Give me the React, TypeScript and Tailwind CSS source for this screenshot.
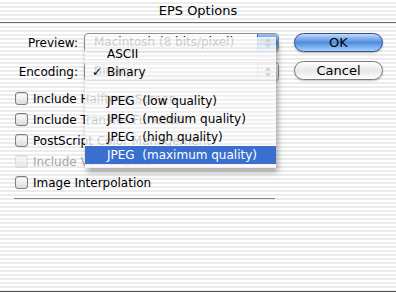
import React from 'react';

const stripes =
  'bg-[repeating-linear-gradient(180deg,#ffffff_0px,#ffffff_2px,#ececec_2px,#ececec_4px)]';

function Checkbox({ label, disabled }: { label: string; disabled?: boolean }) {
  return (
    <div className="flex items-center h-[21px] pl-[15px]">
      <span
        className={`w-[13px] h-[13px] rounded-[3px] border bg-gradient-to-b from-white to-[#dcdcdc] shadow-[inset_0_1px_1px_rgba(0,0,0,0.15)] ${
          disabled ? 'border-[#c8c8c8] opacity-60' : 'border-[#7d7d7d]'
        }`}
      />
      <span className={`ml-[5px] ${disabled ? 'text-[#a8a8a8]' : 'text-black'}`}>{label}</span>
    </div>
  );
}

function Popup({ value, active }: { value: string; active?: boolean }) {
  return (
    <div className="ml-[6px] w-[195px] h-[19px] flex rounded-[4px] border border-[#8f8f8f] bg-gradient-to-b from-white via-[#f4f4f4] to-[#e2e2e2] shadow-[0_1px_1px_rgba(0,0,0,0.2)] overflow-hidden">
      <span className="flex-1 pl-[9px] leading-[17px] whitespace-nowrap">{value}</span>
      <span
        className={`w-[21px] flex flex-col items-center justify-center gap-[2px] border-l ${
          active
            ? 'bg-gradient-to-b from-[#9cc4f2] via-[#4a8ae0] to-[#a9d1f9] border-[#4a6ca8]'
            : 'bg-gradient-to-b from-[#f6f6f6] to-[#dedede] border-[#b0b0b0]'
        }`}
      >
        <span className="w-0 h-0 border-l-[3px] border-r-[3px] border-b-[4px] border-l-transparent border-r-transparent border-b-[#222]" />
        <span className="w-0 h-0 border-l-[3px] border-r-[3px] border-t-[4px] border-l-transparent border-r-transparent border-t-[#222]" />
      </span>
    </div>
  );
}

function MenuItem({ label, checked, selected }: { label: string; checked?: boolean; selected?: boolean }) {
  return (
    <div
      className={`h-[18px] flex items-center whitespace-pre ${
        selected ? 'bg-[#3a6fd0] text-white' : 'text-black'
      }`}
    >
      <span className="w-[22px] pl-[7px] text-[12px]">{checked ? '✓' : ''}</span>
      <span>{label}</span>
    </div>
  );
}

export default function App() {
  return (
    <div
      className={`relative w-[396px] h-[293px] overflow-hidden flex flex-col text-[12px] text-black ${stripes}`}
      style={{ fontFamily: '"DejaVu Sans", "Liberation Sans", sans-serif' }}
    >
      {/* Title bar */}
      <div className="h-[23px] shrink-0 flex items-center justify-center border-b border-[#6e6e6e] rounded-t-[6px] text-[13px]">
        EPS Options
      </div>

      <div className="flex pt-[10px]">
        {/* Form */}
        <div className="w-[279px] flex flex-col">
          <div className="flex items-center">
            <span className="w-[78px] text-right">Preview:</span>
            <Popup value="Macintosh  (8 bits/pixel)" active />
          </div>
          <div className="flex items-center mt-[10px]">
            <span className="w-[78px] text-right">Encoding:</span>
            <Popup value="Binary" />
          </div>
          <div className="mt-[7px] flex flex-col">
            <Checkbox label="Include Halftone Screen" />
            <Checkbox label="Include Transfer Function" />
            <Checkbox label="PostScript Color Management" />
            <Checkbox label="Include Vector Data" disabled />
            <Checkbox label="Image Interpolation" />
          </div>
          <div className="ml-[14px] mt-[5px] w-[261px] h-[1px] bg-[#858585]" />
        </div>

        {/* Buttons */}
        <div className="ml-[15px] flex flex-col gap-[9px]">
          <button className="w-[89px] h-[19px] rounded-full border border-[#2f4f8e] bg-gradient-to-b from-[#c4dbf7] via-[#4d8ce0] to-[#a6d0fa] text-[13px] leading-[17px] shadow-[0_1px_2px_rgba(0,0,0,0.3)]">
            OK
          </button>
          <button className="w-[89px] h-[19px] rounded-full border border-[#7a7a7a] bg-gradient-to-b from-white via-[#e8e8e8] to-white text-[13px] leading-[17px] shadow-[0_1px_2px_rgba(0,0,0,0.25)]">
            Cancel
          </button>
        </div>
      </div>

      <div className="mt-auto mb-[1px] h-[1px] bg-[#505050]" />

      {/* Open popup menu */}
      <div className="absolute left-[85px] top-[37px] w-[191px] pt-[8px] pb-[4px] bg-[repeating-linear-gradient(180deg,rgba(255,255,255,0.82)_0px,rgba(255,255,255,0.82)_2px,rgba(240,240,240,0.82)_2px,rgba(240,240,240,0.82)_4px)] shadow-[2px_4px_6px_rgba(0,0,0,0.35)]">
        <MenuItem label="ASCII" />
        <MenuItem label="Binary" checked />
        <div className="h-[11px]" />
        <MenuItem label="JPEG  (low quality)" />
        <MenuItem label="JPEG  (medium quality)" />
        <MenuItem label="JPEG  (high quality)" />
        <MenuItem label="JPEG  (maximum quality)" selected />
      </div>
    </div>
  );
}
